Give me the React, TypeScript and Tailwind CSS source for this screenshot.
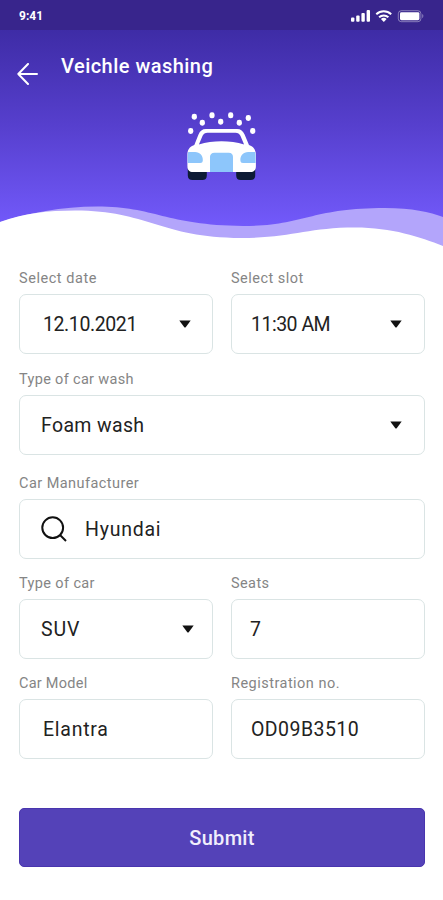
interface FieldProps {
  label: string;
  value: string;
  icon?: "search";
  dropdown?: boolean;
  labelClass?: string;
  valueClass?: string;
  caretClass?: string;
}

function Caret({ className }: { className?: string }) {
  return (
    <svg
      viewBox="0 0 12 8"
      className={`ml-auto h-2 w-3 shrink-0 fill-[#111] ${className ?? ""}`}
    >
      <path d="M.3.5h11.4L6.900 7a1.200 1.200 0 0 1-1.800 0z" />
    </svg>
  );
}

function Field({
  label,
  value,
  icon,
  dropdown,
  labelClass,
  valueClass,
  caretClass,
}: FieldProps) {
  return (
    <div>
      <div
        className={`h-[26px] whitespace-nowrap pt-px text-[14.5px] leading-5 text-[#858585] ${labelClass ?? ""}`}
      >
        {label}
      </div>
      <div className="flex h-[60px] items-center rounded-[7px] border-[1.5px] border-[#dae4e4] bg-white">
        {icon === "search" && (
          <svg
            viewBox="0 0 26 26"
            className="ml-[21px] h-[26px] w-[26px] shrink-0 fill-none stroke-[#111] stroke-2"
          >
            <circle cx="11.7" cy="11.7" r="10.4" />
            <path d="m19 19 6 6" />
          </svg>
        )}
        <span
          className={`whitespace-nowrap pt-0.5 text-[19.5px] leading-6 text-[#222] ${valueClass ?? ""}`}
        >
          {value}
        </span>
        {dropdown && <Caret className={caretClass} />}
      </div>
    </div>
  );
}

function StatusBar() {
  return (
    <div className="relative flex h-[30px] items-center justify-between bg-[#38258c] pl-[19px] pr-[18px] text-white">
      <span className="mt-0.5 text-[12px] font-bold leading-4">9:41</span>
      <svg viewBox="0 0 74 14" className="mt-0.5 h-[14px] w-[74px] fill-white">
        {/* signal */}
        <rect x="0" y="8.5" width="3.4" height="4.3" rx="1" />
        <rect x="5.2" y="6.5" width="3.4" height="6.3" rx="1" />
        <rect x="10.4" y="4" width="3.4" height="8.8" rx="1" />
        <rect x="15.6" y="1" width="3.4" height="11.8" rx="1" />
        {/* wifi */}
        <g className="fill-none stroke-white stroke-2">
          <path d="M25.3 5.2a11 11 0 0 1 14.9 0" />
          <path d="M28.1 8.2a7 7 0 0 1 9.3 0" />
        </g>
        <path d="M29.9 10.1a4.3 4.3 0 0 1 5.7 0l-2.8 2.9z" />
        {/* battery */}
        <rect
          x="47.3"
          y="1.7"
          width="22.6"
          height="11"
          rx="3"
          className="fill-none stroke-white/40"
        />
        <rect x="49" y="3.2" width="19.4" height="8" rx="1.4" />
        <path d="M71.2 5v4.2c1.6-.6 1.6-3.6 0-4.2z" fillOpacity=".4" />
      </svg>
    </div>
  );
}

const drops = [
  [7.3, 4.7],
  [15.3, 10.7],
  [25, 3.3],
  [33.7, 9.7],
  [43.7, 3.3],
  [52.3, 10.7],
  [61.3, 6],
  [3.7, 19],
  [65.7, 19],
];

function CarWashIcon() {
  return (
    <svg viewBox="0 0 70 70" className="h-[70px] w-[70px]">
      {drops.map(([x, y]) => (
        <rect
          key={`${x}-${y}`}
          x={x - 2.6}
          y={y - 3}
          width="5.2"
          height="6"
          rx="2.4"
          fill="#fff"
        />
      ))}
      <path
        d="M.8 54h19v9.5c0 3-1.5 4.500-4.500 4.500H5.500c-3 0-4.700-1.500-4.700-4.500zM49.200 54h19v9.500c0 3-1.600 4.500-4.600 4.500h-9.800c-3 0-4.600-1.500-4.600-4.500z"
        fill="#0d1b35"
      />
      <path
        fillRule="evenodd"
        d="M19 17h31c3.800 0 6 2 7.600 5.500L62 33c4.700 1.500 6.900 5 6.900 10v11.500c0 3.600-2 5.500-5.500 5.500H6C2.400 60 .4 58 .4 54.500V43c0-5 2-8.500 6.900-10l4.200-10.500c1.600-3.600 3.700-5.500 7.500-5.500zM20.500 20.700c-2.400 0-3.900 1-4.900 3.100L11.900 32.400c14-4.200 31.200-4.200 45.200 0l-3.700-8.600c-1-2.100-2.500-3.100-4.900-3.100z"
        fill="#fff"
      />
      <path
        d="M1.200 40H8c5 0 8.200 3.800 7.800 8.500-.1 1.700-.9 2.500-2.600 2.500H.7v-8zM68 40h-6.800c-5 0-8.200 3.800-7.800 8.500.1 1.700.9 2.500 2.600 2.500h12.600v-8zM27.500 40.700h14.200c3 0 4.300 1.600 4.300 4.300V60H23V45c0-2.700 1.500-4.300 4.500-4.300z"
        fill="#8dc6fb"
      />
    </svg>
  );
}

function Header() {
  return (
    <header className="relative h-[268px] text-white">
      <div className="absolute inset-x-0 top-0 h-[248px] bg-linear-to-b from-[#37269a] from-0% via-[#563fcd] via-50% to-[#755cff] to-95%" />
      <svg
        viewBox="0 0 443 50"
        className="absolute left-0 top-[200px] h-[50px] w-full"
      >
        <path
          d="M0 22C28 13 62 6.500 97 6.500C155 6.500 165 25 243 26C304 26 310 8 385 8C412 8 430 12 443 17V50H0z"
          fill="#b3a5fb"
        />
        <path
          d="M0 22C24 13 48 10.500 75 10.500C148 10.500 160 37.500 241 38C291 38 307 27.500 355 27.500C392 27.500 420 37 443 46V50H0z"
          fill="#fff"
        />
      </svg>
      <StatusBar />
      <div className="relative flex pl-[17px] pt-6">
        <svg
          viewBox="0 0 21 22"
          className="mt-[9px] h-[22px] w-[21px] fill-none stroke-white stroke-2"
          strokeLinecap="round"
          strokeLinejoin="round"
        >
          <path d="M20 11H1.300M11 1 1.300 11 11 21" />
        </svg>
        <h1 className="ml-[23px] text-[20px] font-medium leading-6 tracking-[0.47px]">
          Veichle washing
        </h1>
      </div>
      <div className="relative ml-[187px] mt-[27px]">
        <CarWashIcon />
      </div>
    </header>
  );
}

export default function App() {
  return (
    <div className="h-[900px] w-full overflow-hidden bg-white font-['Roboto',sans-serif]">
      <Header />
      <main className="pl-[19px] pr-[18px]">
        <div className="grid grid-cols-2 gap-x-[18px]">
          <Field
            label="Select date"
            value="12.10.2021"
            dropdown
            labelClass="tracking-[0.55px]"
            valueClass="ml-[23px] tracking-[-0.4px]"
            caretClass="mr-[21px]"
          />
          <Field
            label="Select slot"
            value="11:30 AM"
            dropdown
            labelClass="tracking-[0.48px]"
            valueClass="ml-[19px] tracking-[-0.5px]"
            caretClass="mr-[22px]"
          />
        </div>
        <div className="mt-[15px]">
          <Field
            label="Type of car wash"
            value="Foam wash"
            dropdown
            labelClass="tracking-[0.33px]"
            valueClass="ml-[21px] tracking-[0.35px]"
            caretClass="mr-[22px]"
          />
        </div>
        <div className="mt-[18px]">
          <Field
            label="Car Manufacturer"
            value="Hyundai"
            icon="search"
            labelClass="tracking-[0.45px]"
            valueClass="ml-[18px] tracking-[0.75px]"
          />
        </div>
        <div className="mt-[14px] grid grid-cols-2 gap-x-[18px] gap-y-[14px]">
          <Field
            label="Type of car"
            value="SUV"
            dropdown
            labelClass="tracking-[0.38px]"
            valueClass="ml-[21px] tracking-[0.9px]"
            caretClass="mr-[18px]"
          />
          <Field
            label="Seats"
            value="7"
            labelClass="tracking-[0.4px]"
            valueClass="ml-[18px]"
          />
          <Field
            label="Car Model"
            value="Elantra"
            labelClass="tracking-[0.25px]"
            valueClass="ml-[23px] tracking-[0.75px]"
          />
          <Field
            label="Registration no."
            value="OD09B3510"
            labelClass="tracking-[0.48px]"
            valueClass="ml-[19px] tracking-[0.45px]"
          />
        </div>
        <button className="mt-[49px] block h-[59px] w-full rounded-[5px] border border-[#4935ae] bg-[#5442b8] text-[20px] font-medium tracking-[0.3px] text-[#f1eefc]">
          Submit
        </button>
      </main>
    </div>
  );
}
